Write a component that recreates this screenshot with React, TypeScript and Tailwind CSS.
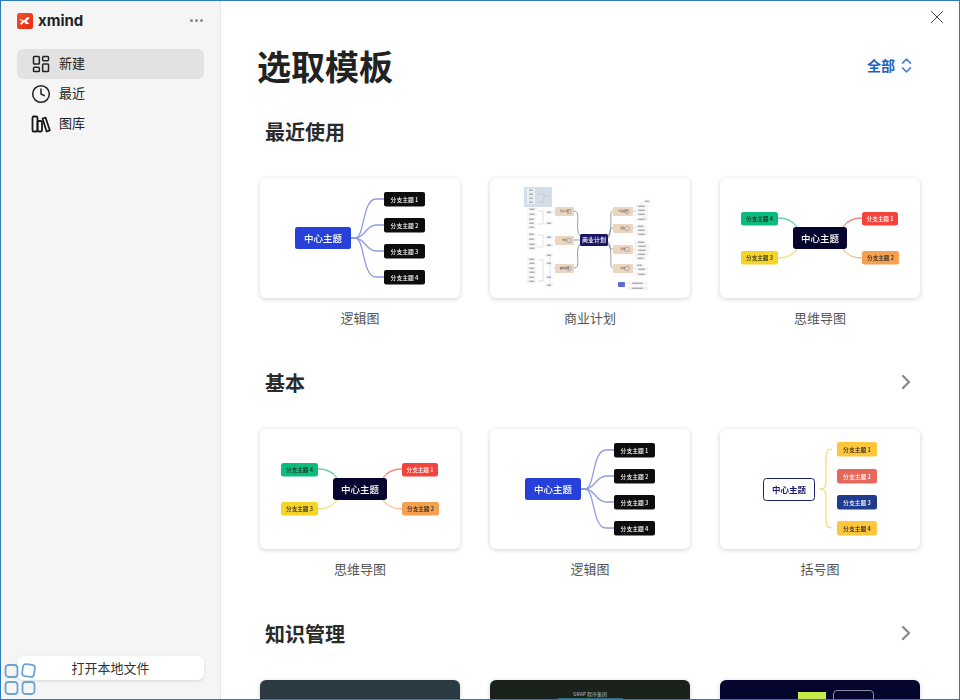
import { ChevronRight, ChevronsUpDown, Clock, LayoutDashboard, X } from 'lucide-react';

const font = '"Noto Sans CJK SC", sans-serif';

interface NodeProps {
  x: number;
  y: number;
  w: number;
  h: number;
  label: string;
  fill: string;
  color?: string;
  size?: number;
  r?: number;
  stroke?: string;
  weight?: number;
}

const Node = ({ x, y, w, h, label, fill, color = '#fff', size = 6, r = 2, stroke, weight = 500 }: NodeProps) => (
  <g>
    <rect x={x} y={y} width={w} height={h} rx={r} fill={fill} stroke={stroke} strokeWidth={stroke ? 1 : 0} />
    <text
      x={x + w / 2}
      y={y + h / 2 + size * 0.4}
      textAnchor="middle"
      fontSize={size}
      fontWeight={weight}
      fill={color}
      fontFamily={font}
    >
      {label}
    </text>
  </g>
);

const LogicThumb = () => (
  <svg viewBox="0 0 200 120" className="w-full h-full blur-[0.3px]">
    <g fill="none" stroke="#8f9be4" strokeWidth="1.3">
      <path d="M91 60 H95 C105 60 102 21 116 21 H124" />
      <path d="M91 60 H95 C105 60 106 47 116 47 H124" />
      <path d="M91 60 H95 C105 60 106 73 116 73 H124" />
      <path d="M91 60 H95 C105 60 102 99 116 99 H124" />
    </g>
    <Node x={35} y={49} w={56} h={22} r={2.5} label="中心主题" fill="#2640d9" size={9.5} />
    {[14, 40, 66, 92].map((y, i) => (
      <Node key={y} x={124} y={y} w={41} h={14.5} label={`分支主题 ${i + 1}`} fill="#0d0d0d" size={5.8} />
    ))}
  </svg>
);

const MindThumb = () => (
  <svg viewBox="0 0 200 120" className="w-full h-full blur-[0.3px]">
    <g fill="none" strokeWidth="1.3">
      <path d="M123 49 C127 43 133 40 142 40" stroke="#f28a85" />
      <path d="M123 71 C127 77 133 80 142 80" stroke="#f7c08a" />
      <path d="M77 49 C73 43 67 40 58 40" stroke="#6fd0ad" />
      <path d="M77 71 C73 77 67 80 58 80" stroke="#f6dc74" />
    </g>
    <Node x={73} y={49} w={54} h={22} r={3} label="中心主题" fill="#05052e" size={9.5} />
    <Node x={142} y={34} w={36} h={13.5} r={2.5} label="分支主题 1" fill="#f4433c" size={5.6} />
    <Node x={142} y={73} w={37} h={13.5} r={2.5} label="分支主题 2" fill="#f5a04f" color="#222" size={5.6} />
    <Node x={21} y={73} w={37} h={13.5} r={2.5} label="分支主题 3" fill="#f5d327" color="#222" size={5.6} />
    <Node x={21} y={34} w={37} h={13.5} r={2.5} label="分支主题 4" fill="#0cbc7d" color="#222" size={5.6} />
  </svg>
);

const BracketThumb = () => (
  <svg viewBox="0 0 200 120" className="w-full h-full blur-[0.3px]">
    <path
      d="M99 60 C105 60 106 58 106 52 V28 C106 22 108 20 112 20 M99 60 C105 60 106 62 106 68 V92 C106 97 108 99 112 99"
      fill="none"
      stroke="#f8d76e"
      strokeWidth="1.2"
    />
    <Node x={43.5} y={49.5} w={51} h={22} r={3} label="中心主题" fill="#fff" color="#1c1f6e" stroke="#1c1f6e" size={8.5} weight={700} />
    <Node x={117} y={13} w={40} h={14.5} r={2.5} label="分支主题 1" fill="#fdc63c" color="#222" size={5.8} />
    <Node x={117} y={40} w={40} h={14.5} r={2.5} label="分支主题 2" fill="#e7685a" size={5.8} />
    <Node x={117} y={66} w={40} h={14.5} r={2.5} label="分支主题 3" fill="#1f3c8f" size={5.8} />
    <Node x={117} y={92} w={40} h={14.5} r={2.5} label="分支主题 4" fill="#fdc63c" color="#222" size={5.8} />
  </svg>
);

const tan = '#ecd6bf';

// x, y, width of the tiny leaf topics on the business plan map
const leaves: [number, number, number][] = [
  [145, 27, 13], [145, 31, 13], [145, 35, 13], [145, 40, 13],
  [145, 47, 11], [145, 51, 13], [145, 55, 13],
  [145, 63, 12], [145, 67, 14], [145, 71, 14], [145, 75, 13], [145, 79, 11],
  [145, 86, 9], [145, 90, 13], [145, 95, 13],
  [37, 30, 10], [37, 35, 10], [37, 40, 9], [37, 44, 9], [37, 48, 9],
  [37, 55, 9], [37, 60, 9], [37, 65, 10], [37, 69, 10],
  [37, 80, 9], [37, 84, 10], [37, 89, 9], [37, 93, 10], [37, 98, 9], [37, 102, 9],
  [55, 33, 8], [55, 44, 8], [55, 58, 8], [55, 66, 8], [55, 76, 8], [55, 84, 8], [55, 98, 8], [55, 106, 8],
  [153, 22, 8], [137, 104, 21], [137, 109, 21],
];

const panelLeaves: [number, number, number][] = [
  [37, 11, 8], [37, 15, 8], [37, 19, 8], [37, 23, 8],
];

const tanNodes: [number, number, string][] = [
  [65, 29, '竞争分析'],
  [65, 58, '市场'],
  [65, 86, '营销策略'],
  [123, 29, '产品服务'],
  [123, 46, '团队'],
  [123, 67, '风险'],
  [123, 86, '财务'],
];

const BusinessThumb = () => (
  <svg viewBox="0 0 200 120" className="w-full h-full blur-[0.3px]">
    <rect x={34} y={9} width={28} height={20} fill="#d5dee8" />
    <g fill="none" stroke="#6a7088" strokeWidth="0.7">
      <path d="M118 58 C124 50 118 33 123 33" />
      <path d="M118 60 C122 55 118 50 123 50" />
      <path d="M118 64 C122 68 118 71 123 71" />
      <path d="M118 66 C124 74 118 90 123 90" />
      <path d="M90 58 C84 50 92 33 84 33" />
      <path d="M90 62 H84" />
      <path d="M90 66 C84 74 92 90 84 90" />
    </g>
    <g fill="none" stroke="#a9acb8" strokeWidth="0.4">
      <path d="M65 33 H63 M65 62 H63 M65 90 H63 M48 16 H54 V24 H48 M54 18 H60 M48 33 H53 V46 H48 M48 57 H53 V69 H48 M48 82 H53 V103 H48 M63 77 H60 V106 H63" />
      <path d="M143 33 C150 33 150 26 153 24 M143 33 C150 36 152 38 158 40 M143 50 H145 M143 71 H145 M143 90 H145" />
    </g>
    {[...leaves, ...panelLeaves].map(([x, y, w]) => (
      <g key={`${x}-${y}`}>
        <rect x={x} y={y - 0.5} width={w} height={3.4} fill="#f3f3f5" />
        <rect x={x + w * 0.25} y={y + 0.7} width={w * 0.5} height={1} fill="#8e909a" />
      </g>
    ))}
    {tanNodes.map(([x, y, label]) => (
      <g key={label}>
        <Node x={x} y={y} w={x === 65 ? 19 : 20} h={9} r={1} label={label} fill={tan} color="#555" size={2.4} />
        <rect x={x + 12} y={y + 2.5} width={4} height={4} rx={0.8} fill="none" stroke="#7d83a0" strokeWidth="0.5" />
      </g>
    ))}
    <Node x={90} y={56} w={28} h={12} r={1.5} label="商业计划" fill="#1b1663" size={6} />
    <rect x={128} y={104} width={7} height={5} rx={1} fill="#5b6ad8" />
  </svg>
);

const DarkOne = () => <div className="w-full h-full bg-[#2b3a42]" />;

const DarkTwo = () => (
  <div className="w-full h-full bg-[#1b211b] flex flex-col items-center pt-[11px]">
    <span className="text-[5px] leading-[6px] text-[#b5bab5]">GRAP 程序集团</span>
    <div className="mt-[1px] w-[65px] h-[10px] bg-[#2f6f86]" />
  </div>
);

const DarkThree = () => (
  <div className="w-full h-full bg-[#05052e] flex items-start justify-end gap-[7px] pr-[46px] pt-[10px]">
    <div className="w-[28px] h-[14px] mt-[2px] bg-[#c5e84a]" />
    <div className="w-[41px] h-[14px] border border-[#8d8da8] rounded-sm" />
  </div>
);

interface Template {
  label: string;
  thumb: React.ReactNode;
}

const sections: { title: string; more: boolean; items: Template[] }[] = [
  {
    title: '最近使用',
    more: false,
    items: [
      { label: '逻辑图', thumb: <LogicThumb /> },
      { label: '商业计划', thumb: <BusinessThumb /> },
      { label: '思维导图', thumb: <MindThumb /> },
    ],
  },
  {
    title: '基本',
    more: true,
    items: [
      { label: '思维导图', thumb: <MindThumb /> },
      { label: '逻辑图', thumb: <LogicThumb /> },
      { label: '括号图', thumb: <BracketThumb /> },
    ],
  },
  {
    title: '知识管理',
    more: true,
    items: [
      { label: '', thumb: <DarkOne /> },
      { label: '', thumb: <DarkTwo /> },
      { label: '', thumb: <DarkThree /> },
    ],
  },
];

const LibraryIcon = () => (
  <svg width="20" height="20" viewBox="0 0 20 20" fill="none" stroke="#1a1a1a" strokeWidth="1.8" strokeLinejoin="round">
    <rect x="1.5" y="2.5" width="5" height="15" rx="1.3" />
    <rect x="6.5" y="7" width="4.5" height="10.5" rx="1.2" />
    <path d="M11.5 4.5 L14.6 3.7 L18.8 16.3 L15.6 17.5 Z" />
  </svg>
);

const navItems = [
  { label: '新建', icon: <LayoutDashboard size={20} strokeWidth={1.8} />, active: true },
  { label: '最近', icon: <Clock size={20} strokeWidth={1.8} />, active: false },
  { label: '图库', icon: <LibraryIcon />, active: false },
];

export default function App() {
  return (
    <div
      className="relative w-[960px] h-[700px] flex overflow-hidden bg-white border border-[#2b7cb8] text-[#1f1f1f]"
      style={{ fontFamily: font }}
    >
      {/* Sidebar */}
      <aside className="w-[220px] shrink-0 flex flex-col bg-[#f5f5f5] border-r border-[#e6e6e6] pl-[16px] pr-[16px]">
        <div className="h-[39px] flex items-center justify-between">
          <div className="flex items-center gap-[5px]">
            <svg width="16" height="16" viewBox="0 0 16 16">
              <defs>
                <linearGradient id="logo" x1="0" y1="0" x2="1" y2="1">
                  <stop offset="0" stopColor="#f2542d" />
                  <stop offset="1" stopColor="#e8280f" />
                </linearGradient>
              </defs>
              <rect width="16" height="16" rx="2.5" fill="url(#logo)" />
              <path d="M3 6 L7 7.5 L10 4 L13 5 L9.5 8 L12.5 11 L9 11 L7 9 L4.5 12 L3 10.5 L5.5 8 L3 7 Z" fill="#fff" />
            </svg>
            <span className="text-[15px] leading-none font-bold text-[#222]" style={{ fontFamily: 'Inter, sans-serif' }}>
              xmind
            </span>
          </div>
          <div className="flex gap-[2px] mr-[1px]">
            <span className="w-[3px] h-[3px] rounded-full bg-[#8a8a8a]" />
            <span className="w-[3px] h-[3px] rounded-full bg-[#8a8a8a]" />
            <span className="w-[3px] h-[3px] rounded-full bg-[#8a8a8a]" />
          </div>
        </div>
        <nav className="mt-[9px] flex flex-col">
          {navItems.map((item) => (
            <div
              key={item.label}
              className={`h-[30px] flex items-center gap-[8px] pl-[14px] rounded-md text-[13px] text-[#222] ${item.active ? 'bg-[#e2e2e2]' : ''}`}
            >
              {item.icon}
              <span className="mb-[2px]">{item.label}</span>
            </div>
          ))}
        </nav>
        <button className="mt-auto mb-[19px] h-[24px] pb-[2px] rounded-md bg-white shadow-[0_1px_3px_rgba(0,0,0,0.12)] text-[13px] leading-none text-[#333]">
          打开本地文件
        </button>
      </aside>

      {/* Main */}
      <main className="relative flex-1 min-w-0 overflow-hidden">
        <button className="absolute top-[5px] right-[11px] text-[#333]">
          <X size={22} strokeWidth={1} />
        </button>

        <div className="mt-[45px] mb-[31px] h-[40px] pl-[36px] pr-[43px] flex items-center justify-between">
          <h1 className="text-[34px] leading-none font-bold text-[#222]">选取模板</h1>
          <div className="flex items-center gap-[2px] text-[#1a63c4] text-[14px] font-bold mb-[2px]">
            <span>全部</span>
            <ChevronsUpDown size={19} strokeWidth={2} className="text-[#4c86d2]" />
          </div>
        </div>

        {sections.map((section) => (
          <section key={section.title} className="mb-[40px]">
            <div className="h-[30px] mb-[31px] pl-[44px] pr-[41px] flex items-center justify-between">
              <h2 className="text-[20px] leading-none font-bold text-[#2a2a2a]">{section.title}</h2>
              {section.more && <ChevronRight size={24} strokeWidth={2.4} className="text-[#8c8c8c] mb-[3px]" />}
            </div>
            <div className="pl-[39px] flex gap-[30px]">
              {section.items.map((item, i) => (
                <div key={i} className="w-[200px]">
                  <div className="h-[120px] rounded-md overflow-hidden bg-white shadow-[0_1px_5px_rgba(0,0,0,0.18)]">
                    {item.thumb}
                  </div>
                  <p className="mt-[10px] h-[20px] text-center text-[13px] leading-[20px] text-[#555]">{item.label}</p>
                </div>
              ))}
            </div>
          </section>
        ))}
      </main>

      {/* Floating app grid over the corner */}
      <svg
        className="absolute left-[3px] bottom-[3px]"
        width="33"
        height="33"
        viewBox="0 0 33 33"
        fill="none"
        stroke="#6aa5d4"
        strokeWidth="1.8"
      >
        <rect x="1.5" y="2" width="12" height="12" rx="3" />
        <rect x="18.5" y="1.5" width="12" height="12" rx="3" transform="rotate(8 24.5 7.5)" />
        <rect x="1.5" y="19" width="12" height="12" rx="3" />
        <path d="M18.5 22 a3 3 0 0 1 3 -3 h6 a3 3 0 0 1 3 3 v6 a3 3 0 0 1 -3 3 h-6 a3 3 0 0 1 -3 -3 z" />
      </svg>
    </div>
  );
}
